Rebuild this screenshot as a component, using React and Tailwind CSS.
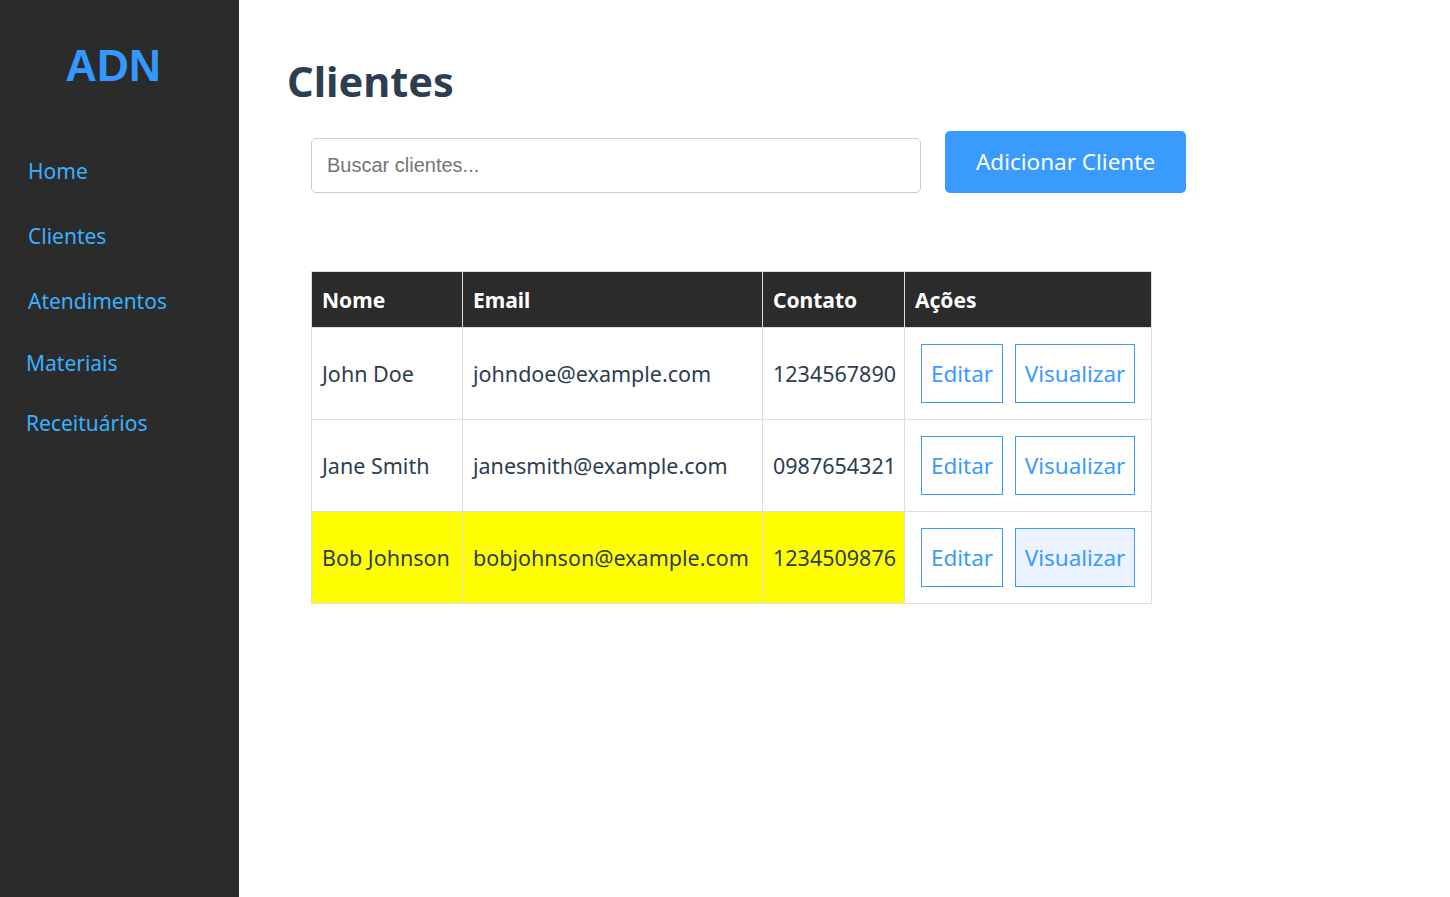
import React, { useState } from "react";

const clientes = [
  { nome: "John Doe", email: "johndoe@example.com", contato: "1234567890" },
  { nome: "Jane Smith", email: "janesmith@example.com", contato: "0987654321" },
  { nome: "Bob Johnson", email: "bobjohnson@example.com", contato: "1234509876", destaque: true },
];

const links = [
  { label: "Home", cls: "pl-[28px] h-[65px]" },
  { label: "Clientes", cls: "pl-[28px] h-[65px]" },
  { label: "Atendimentos", cls: "pl-[28px] h-[65px]" },
  { label: "Materiais", cls: "pl-[26px] h-[59px]" },
  { label: "Receituários", cls: "pl-[26px] h-[61px]" },
];

export default function App() {
  const [busca, setBusca] = useState("");

  return (
    <div className="flex min-h-screen font-[family-name:'Noto_Sans',sans-serif]">
      <aside className="w-[239px] shrink-0 bg-[#2b2b2b]">
        <div className="pr-[13px] pt-[36px] text-center font-[family-name:'Liberation_Sans',Arial,sans-serif] text-[44px] font-bold leading-[60px] text-[#3399ff]">
          ADN
        </div>
        <nav className="mt-[43px]">
          <ul>
            {links.map((l) => (
              <li key={l.label} className={`flex items-center ${l.cls}`}>
                <a href="#" className="text-[21px] text-[#3ab0ff]">
                  {l.label}
                </a>
              </li>
            ))}
          </ul>
        </nav>
      </aside>

      <main className="flex-1 bg-white pl-[48px] pt-[51px]">
        <h1 className="text-[41.5px] font-bold leading-[60px] text-[#2c3e50]">Clientes</h1>

        <div className="mt-[20px] flex items-end gap-[24px] pl-[24px]">
          <input
            value={busca}
            onChange={(e) => setBusca(e.target.value)}
            placeholder="Buscar clientes..."
            className="h-[55px] w-[610px] rounded-[5px] border border-[#cccccc] px-[15px] font-[family-name:'Liberation_Sans',Arial,sans-serif] text-[20px] text-[#333] placeholder:text-[#757575] outline-none"
          />
          <button className="h-[62px] w-[241px] rounded-[5px] bg-[#3a9bff] text-[22.5px] text-white">
            Adicionar Cliente
          </button>
        </div>

        <table className="ml-[24px] mt-[78px] w-[841px] table-fixed border-collapse border border-[#dddddd] text-[21.5px] text-[#2c3e50]">
          <colgroup>
            <col className="w-[151px]" />
            <col className="w-[300px]" />
            <col className="w-[142px]" />
            <col className="w-[247px]" />
          </colgroup>
          <thead>
            <tr className="h-[56px] bg-[#2b2b2b] text-left text-[21px] text-white">
              <th className="border border-[#dddddd] px-[10px] pt-[3px] font-bold">Nome</th>
              <th className="border border-[#dddddd] px-[10px] pt-[3px] font-bold">Email</th>
              <th className="border border-[#dddddd] px-[10px] pt-[3px] font-bold">Contato</th>
              <th className="border border-[#dddddd] px-[10px] pt-[3px] font-bold">Ações</th>
            </tr>
          </thead>
          <tbody>
            {clientes.map((c) => (
              <tr key={c.email} className="h-[92px]">
                <td className={`whitespace-nowrap border border-[#dddddd] px-[10px] pt-[2px] ${c.destaque ? "bg-[#ffff00]" : ""}`}>{c.nome}</td>
                <td className={`whitespace-nowrap border border-[#dddddd] px-[10px] pt-[2px] ${c.destaque ? "bg-[#ffff00]" : ""}`}>{c.email}</td>
                <td className={`whitespace-nowrap border border-[#dddddd] px-[10px] pt-[2px] ${c.destaque ? "bg-[#ffff00]" : ""}`}>{c.contato}</td>
                <td className="border border-[#dddddd] pl-[16px]">
                  <div className="flex gap-[12px]">
                    <button className="h-[59px] w-[82px] border border-[#3a9bff] text-[22.5px] text-[#3a9bff]">
                      Editar
                    </button>
                    <button
                      className={`h-[59px] w-[120px] border border-[#3a9bff] text-[22.5px] text-[#3a9bff] ${c.destaque ? "bg-[#eaf3ff]" : ""}`}
                    >
                      Visualizar
                    </button>
                  </div>
                </td>
              </tr>
            ))}
          </tbody>
        </table>
      </main>
    </div>
  );
}
